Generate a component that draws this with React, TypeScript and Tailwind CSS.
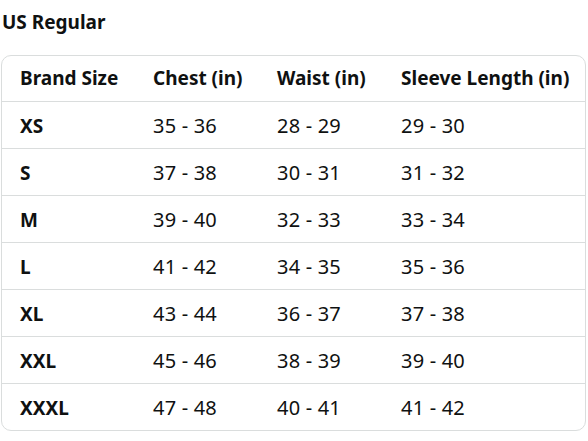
import React from "react";

const rows = [
  ["XS", "35 - 36", "28 - 29", "29 - 30"],
  ["S", "37 - 38", "30 - 31", "31 - 32"],
  ["M", "39 - 40", "32 - 33", "33 - 34"],
  ["L", "41 - 42", "34 - 35", "35 - 36"],
  ["XL", "43 - 44", "36 - 37", "37 - 38"],
  ["XXL", "45 - 46", "38 - 39", "39 - 40"],
  ["XXXL", "47 - 48", "40 - 41", "41 - 42"],
];

export default function App() {
  return (
    <div
      className="w-[588px] h-[441px] bg-white text-[#0f1111] pl-[1px] pr-[2px]"
      style={{ fontFamily: '"Noto Sans", "Open Sans", sans-serif' }}
    >
      <div className="h-[45px] flex items-center text-[19px] font-bold pl-[1px]">US Regular</div>
      <div className="mt-[10px] border border-[#dadddd] rounded-[10px] overflow-hidden text-[19px]">
        <div className="grid grid-cols-[133px_124px_124px_1fr] h-[46px] items-center border-b border-[#dadddd] font-bold">
          <div className="pl-[18px]">Brand Size</div>
          <div className="pl-[18px]">Chest (in)</div>
          <div className="pl-[18px]">Waist (in)</div>
          <div className="pl-[18px]">Sleeve Length (in)</div>
        </div>
        {rows.map((r, i) => (
          <div
            key={r[0]}
            className={
              i < rows.length - 1
                ? "grid grid-cols-[133px_124px_124px_1fr] h-[47px] pt-[2px] items-center border-b border-[#dadddd]"
                : "grid grid-cols-[133px_124px_124px_1fr] h-[46px] pt-[2px] items-center"
            }
          >
            <div className="pl-[18px] font-bold">{r[0]}</div>
            <div className="pl-[18px] text-[20px] tracking-[0.2px]">{r[1]}</div>
            <div className="pl-[18px] text-[20px] tracking-[0.2px]">{r[2]}</div>
            <div className="pl-[18px] text-[20px] tracking-[0.2px]">{r[3]}</div>
          </div>
        ))}
      </div>
    </div>
  );
}
